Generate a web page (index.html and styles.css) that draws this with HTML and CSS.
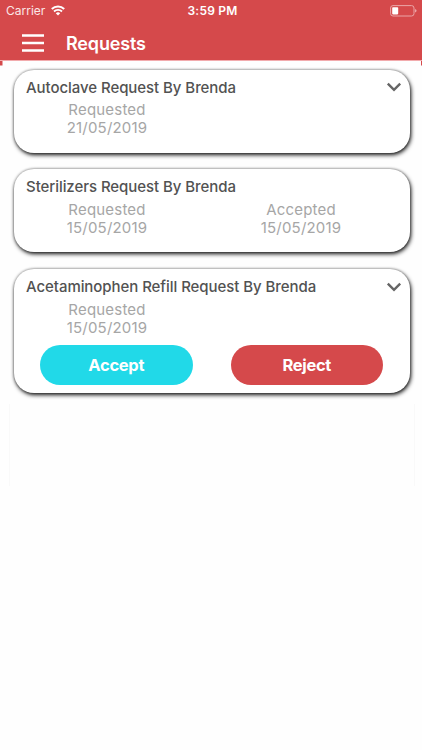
FILE: index.html
```html
<!DOCTYPE html>
<html lang="en">
<head>
    <meta charset="UTF-8">
    <meta name="viewport" content="width=device-width, initial-scale=1.0">
    <title>Requests</title>
    <link rel="stylesheet" href="styles.css">
</head>
<body>
    <header class="header">
        <div class="status-bar">
            <div class="carrier">
                <span>Carrier</span>
                <svg class="wifi" width="14" height="11" viewBox="0 0 14 11">
                    <path d="M0.8 4 A8.8 8.8 0 0 1 13.2 4" fill="none" stroke="#fff" stroke-width="2"/>
                    <path d="M3 6.5 A5.6 5.6 0 0 1 11 6.5" fill="none" stroke="#fff" stroke-width="1.8"/>
                    <path d="M4.8 8.2 A3.4 3.4 0 0 1 9.2 8.2 L7 10.6 Z" fill="#fff"/>
                </svg>
            </div>
            <span class="time">3:59 PM</span>
            <svg class="battery" width="27" height="12" viewBox="0 0 27 12">
                <rect x="0.6" y="0.6" width="23.4" height="10.4" rx="2.4" fill="none" stroke="#eba5a7" stroke-width="1"/>
                <rect x="2.2" y="2.2" width="6" height="7.2" rx="0.8" fill="#fff"/>
                <path d="M25 4 Q26.6 4.6 26.6 5.8 Q26.6 7 25 7.6 Z" fill="#eba5a7"/>
            </svg>
        </div>
        <nav class="navbar">
            <svg class="menu" width="22" height="18" viewBox="0 0 22 18">
                <path d="M0 1.5H22M0 9H22M0 16.5H22" stroke="#fff" stroke-width="2.6"/>
            </svg>
            <h1>Requests</h1>
        </nav>
    </header>

    <main class="requests">
        <div class="card">
            <div class="card-title">
                <h2>Autoclave Request By Brenda</h2>
                <svg class="arrow" width="16" height="10" viewBox="0 0 16 10">
                    <path d="M1.8 1.6L8 7.8L14.2 1.6" fill="none" stroke="#666" stroke-width="2.4"/>
                </svg>
            </div>
            <div class="dates">
                <p>Requested<br><span>21/05/2019</span></p>
            </div>
        </div>

        <div class="card">
            <div class="card-title">
                <h2>Sterilizers Request By Brenda</h2>
            </div>
            <div class="dates">
                <p>Requested<br><span>15/05/2019</span></p>
                <p>Accepted<br><span>15/05/2019</span></p>
            </div>
        </div>

        <div class="card open">
            <div class="card-title">
                <h2>Acetaminophen Refill Request By Brenda</h2>
                <svg class="arrow" width="16" height="10" viewBox="0 0 16 10">
                    <path d="M1.8 1.6L8 7.8L14.2 1.6" fill="none" stroke="#666" stroke-width="2.4"/>
                </svg>
            </div>
            <div class="dates">
                <p>Requested<br><span>15/05/2019</span></p>
            </div>
            <div class="buttons">
                <button class="accept">Accept</button>
                <button class="reject">Reject</button>
            </div>
        </div>
        <div class="empty"></div>
    </main>
</body>
</html>
```
FILE: styles.css
```css
* {
    box-sizing: border-box;
}
body {
    margin: 0;
    height: 750px;
    overflow: hidden;
    background: #fefefe;
    font-family: Inter, "Liberation Sans", sans-serif;
}
.header {
    height: 61px;
    background: #d5494b;
    border-bottom: 1px solid #f2abad;
    color: white;
}
.status-bar {
    display: grid;
    grid-template-columns: 1fr auto 1fr;
    align-items: center;
    height: 21px;
    padding: 0 5px 0 6px;
}
.carrier {
    display: flex;
    align-items: center;
    gap: 6px;
    font-size: 12px;
    color: #fbe6e6;
}
.time {
    padding-left: 2px;
    font-size: 12px;
    font-weight: 600;
    letter-spacing: 0.2px;
}
.battery {
    justify-self: end;
}
.navbar {
    display: flex;
    align-items: center;
    gap: 22px;
    height: 39px;
    padding: 5px 0 0 22px;
}
.navbar h1 {
    margin: 1px 0 0;
    font-size: 18px;
    font-weight: 600;
    line-height: 24px;
    letter-spacing: -0.15px;
}
/* thin red edges on both sides just under the header */
.requests {
    display: flex;
    flex-direction: column;
    gap: 16.8px;
    padding: 8.5px 12px 0 13.5px;
    background: linear-gradient(#d5494b, #d5494b) 0 0 / 2.5px 4.5px no-repeat,
                linear-gradient(#d5494b, #d5494b) 100% 0 / 1px 4.5px no-repeat;
}
.card {
    height: 83px;
    padding: 7.5px 8px 0 12.5px;
    background: white;
    border-radius: 20px;
    box-shadow: 0 0 2px 1px rgba(0, 0, 0, 0.2), 1px 2px 4px rgba(0, 0, 0, 0.9);
}
.card.open {
    height: 124px;
}
.card-title {
    display: flex;
    justify-content: space-between;
    align-items: center;
    height: 20px;
}
.card-title h2 {
    margin: 0;
    font-size: 15px;
    font-weight: 500;
    letter-spacing: -0.06px;
    color: #525252;
    white-space: nowrap;
}
.dates {
    display: flex;
    margin: 4px 0 0 -16px;
}
.dates p {
    width: 194px;
    margin: 0;
    font-size: 15px;
    line-height: 18px;
    letter-spacing: 0.2px;
    text-align: center;
    color: #a6a6a6;
}
.buttons {
    display: flex;
    gap: 38px;
    margin: 8px 0 0 14px;
}
.buttons button {
    width: 152.5px;
    height: 40.5px;
    padding: 0;
    border: none;
    border-radius: 20.25px;
    font-family: inherit;
    font-size: 16.5px;
    font-weight: 700;
    letter-spacing: -0.3px;
    color: white;
    cursor: pointer;
}
.accept {
    background: #21d9e8;
}
.buttons .reject {
    background: #d5494b;
}
.empty {
    height: 82px;
    margin: -6px -5px 0 -5px;
    border: solid #f9f9f9;
    border-width: 0 1px;
}
```
